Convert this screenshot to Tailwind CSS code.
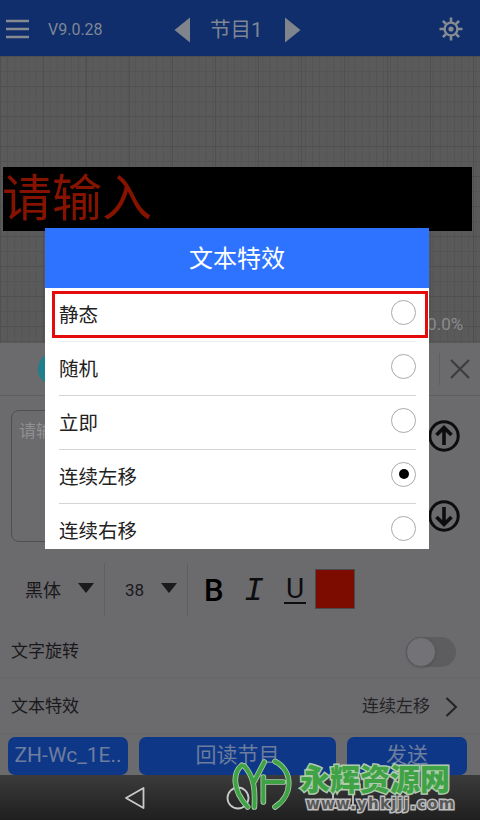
<!DOCTYPE html>
<html lang="zh">
<head>
<meta charset="utf-8">
<script src="https://cdn.jsdelivr.net/npm/@tailwindcss/browser@4"></script>
</head>
<body class="m-0">
<div class="relative w-[480px] h-[820px] overflow-hidden flex flex-col bg-[#6b6a6d] font-['Roboto','Noto_Sans_CJK_SC',sans-serif]">

  <!-- header -->
  <header class="h-[56px] shrink-0 bg-[#0f2e6b] flex items-center text-[#7f8794] pt-[4px]">
    <svg class="ml-[6px] mr-[19px] -mt-[2px]" width="23" height="20" viewBox="0 0 23 20"><path d="M0 2h23M0 10h23M0 18h23" stroke="#868b92" stroke-width="2.6"/></svg>
    <span class="text-[16px] w-[127px] -mt-[1px]">V9.0.28</span>
    <svg class="-ml-[1px]" width="17" height="26" viewBox="0 0 17 26"><path d="M16 0.5V25.5L0.5 13Z" fill="#80858d"/></svg>
    <span class="text-[20.5px] w-[74px] ml-[19px] leading-none">节目1</span>
    <svg width="17" height="26" viewBox="0 0 17 26"><path d="M1 0.5V25.5L16.5 13Z" fill="#80858d"/></svg>
    <svg class="ml-auto mr-[17px] -mt-[2px]" width="24" height="24" viewBox="0 0 24 24" fill="none" stroke="#868b92">
      <circle cx="12" cy="12" r="6.4" stroke-width="2.4"/><circle cx="12" cy="12" r="2.6" fill="#868b92" stroke="none"/>
      <path d="M12 0.5V5M12 19V23.5M0.5 12H5M19 12H23.5M3.9 3.9L7 7M17 17L20.1 20.1M20.1 3.9L17 7M7 17L3.9 20.1" stroke-width="2.6"/>
    </svg>
  </header>

  <!-- canvas -->
  <section class="relative h-[287px] shrink-0 bg-[#5a5a5b] bg-[linear-gradient(#4f4f50_1px,transparent_1px),linear-gradient(90deg,#505051_1px,transparent_1px),linear-gradient(#545455_1px,transparent_1px),linear-gradient(90deg,#545455_1px,transparent_1px)] bg-[size:100%_30px,43px_100%,100%_15px,7.1px_100%] pt-[111px]">
    <div class="ml-[3px] w-[469px] h-[64px] bg-black text-[#861300] text-[50px] leading-[64px] -indent-[1px] whitespace-nowrap">请输入</div>
    <span class="absolute left-[408px] top-[258px] text-[17px] text-[#8b8b8d] leading-5">100.0%</span>
  </section>

  <!-- panel -->
  <section class="flex-1 flex flex-col min-h-0">
    <div class="h-[53px] shrink-0 border-b border-[#5f5e61] flex items-center">
      <div class="ml-[38px] w-[34px] h-[34px] rounded-full bg-[#1f7f8c]"></div>
      <div class="ml-auto h-[32px] w-px bg-[#5f5e61]"></div>
      <svg class="mx-[10px]" width="20" height="20" viewBox="0 0 20 20"><path d="M1 1L19 19M19 1L1 19" stroke="#3d3d40" stroke-width="2.2"/></svg>
    </div>

    <div class="h-[167px] shrink-0 flex pl-[11px] pt-[14px]">
      <div class="w-[405px] h-[132px] rounded-[8px] border border-[#4f4e51] pl-[7px] pt-[8px] text-[17px] leading-6 text-[#8f8e91]">请输入</div>
      <div class="ml-[12px] pt-[10px] flex flex-col gap-[48px]">
        <svg width="32" height="32" viewBox="0 0 32 32" fill="none" stroke="#0d0d10" stroke-width="3"><circle cx="16" cy="16" r="14.2"/><path d="M16 25V8M8.5 15L16 7.5L23.5 15" stroke-width="3.6"/></svg>
        <svg width="32" height="32" viewBox="0 0 32 32" fill="none" stroke="#0d0d10" stroke-width="3"><circle cx="16" cy="16" r="14.2"/><path d="M16 7V24M8.5 17L16 24.5L23.5 17" stroke-width="3.6"/></svg>
      </div>
    </div>

    <!-- toolbar -->
    <div class="h-[53px] shrink-0 flex items-center">
      <span class="ml-[25px] text-[18px] text-[#19191c] w-[53px] pt-[2px]">黑体</span>
      <svg class="-mt-[3px]" width="16" height="10" viewBox="0 0 16 10"><path d="M0 0H16L8 10Z" fill="#1a1a1d"/></svg>
      <span class="ml-[10px] w-px h-[53px] bg-[#5f5e61]"></span>
      <span class="ml-[20px] text-[17px] text-[#19191c] w-[36px] pt-[2px]">38</span>
      <svg class="-mt-[3px]" width="16" height="10" viewBox="0 0 16 10"><path d="M0 0H16L8 10Z" fill="#1a1a1d"/></svg>
      <span class="ml-[10px] w-px h-[53px] bg-[#5f5e61]"></span>
      <span class="ml-[16px] w-[40px] text-[31px] leading-none font-medium text-black font-['Roboto'] pt-[1px]">B</span>
      <span class="w-[40px] text-[33px] leading-none italic text-[#0d0d10] font-['Liberation_Mono'] pt-[3px]">I</span>
      <span class="w-[22px] text-[28px] leading-[25px] text-[#0d0d10] font-['Roboto'] border-b-2 border-[#0d0d10] flex justify-center h-[28px] pb-[1px]">U</span>
      <span class="ml-[9px] w-[40px] h-[40px] bg-[#7c0c00] border border-[#4a4a4d] -mt-[2px]"></span>
    </div>

    <div class="h-[62px] shrink-0 border-b border-[#67666a] flex items-center pl-[11px] pr-[24px] pt-[11px] text-[17px] text-[#19191c]">
      <span>文字旋转</span>
      <div class="relative ml-auto w-[50px] h-[30px] rounded-full bg-[#5d5c5f]">
        <div class="absolute left-0 top-0 w-[30px] h-[30px] rounded-full bg-[#737276] border border-[#5a595c] shadow"></div>
      </div>
    </div>

    <div class="h-[56px] shrink-0 border-b border-[#67666a] flex items-center pl-[11px] pr-[22px] pt-[3px] text-[17px] text-[#19191c]">
      <span>文本特效</span>
      <span class="ml-auto text-[#232326]">连续左移</span>
      <svg class="ml-[15px]" width="13" height="20" viewBox="0 0 13 20" fill="none"><path d="M1.5 1L11 10L1.5 19" stroke="#232326" stroke-width="2"/></svg>
    </div>

    <div class="h-[38px] shrink-0 flex gap-[11px] px-[8px] mt-[3px] text-[21px] text-[#6c7d9e]">
      <div class="w-[120px] rounded-[7px] bg-[#0f3787] flex items-center justify-center">ZH-Wc_1E..</div>
      <div class="w-[197px] rounded-[7px] bg-[#0f3787] flex items-center justify-center">回读节目</div>
      <div class="w-[120px] rounded-[7px] bg-[#0f3787] flex items-center justify-center">发送</div>
    </div>
  </section>

  <!-- system nav -->
  <nav class="h-[45px] shrink-0 bg-[linear-gradient(#3b3b3c,#1f1f20)] flex items-center">
    <svg class="ml-[124px]" width="22" height="24" viewBox="0 0 22 24" fill="none"><path d="M19.5 2V22L2 12Z" stroke="#c9c9c9" stroke-width="1.8" stroke-linejoin="round"/></svg>
    <svg class="ml-[80px]" width="24" height="24" viewBox="0 0 24 24" fill="none"><circle cx="12" cy="12" r="10.5" stroke="#c9c9c9" stroke-width="1.8"/></svg>
    <svg class="ml-[82px]" width="22" height="24" viewBox="0 0 22 24" fill="none"><rect x="1" y="2" width="20" height="20" stroke="#c9c9c9" stroke-width="1.8"/></svg>
  </nav>

  <!-- dialog -->
  <div class="absolute left-[45px] top-[228px] w-[384px] h-[321px] overflow-hidden bg-white">
    <div class="h-[60px] pt-[1px] bg-[#2e73ff] text-white text-[24px] flex items-center justify-center">文本特效</div>
    <div class="relative h-[54px] text-[19.5px] text-[#222] flex items-center pl-[14px] pr-[13px]">
      <span class="pt-[2px]">静态</span>
      <span class="ml-auto -mt-[6px] w-[25px] h-[25px] rounded-full border border-[#aaa]"></span>
      <div class="absolute left-[7px] top-[3px] w-[376px] h-[47px] border-[3px] border-[#e30b0b]"></div>
      <div class="absolute left-[14px] right-[13px] bottom-0 h-px bg-[#ececec]"></div>
    </div>
    <div class="relative h-[54px] text-[19.5px] text-[#222] flex items-center pl-[14px] pr-[13px]">
      <span class="pt-[2px]">随机</span>
      <span class="ml-auto -mt-[6px] w-[25px] h-[25px] rounded-full border border-[#aaa]"></span>
      <div class="absolute left-[14px] right-[13px] bottom-0 h-px bg-[#d4d4d4]"></div>
    </div>
    <div class="relative h-[54px] text-[19.5px] text-[#222] flex items-center pl-[14px] pr-[13px]">
      <span class="pt-[2px]">立即</span>
      <span class="ml-auto -mt-[6px] w-[25px] h-[25px] rounded-full border border-[#aaa]"></span>
      <div class="absolute left-[14px] right-[13px] bottom-0 h-px bg-[#d4d4d4]"></div>
    </div>
    <div class="relative h-[54px] text-[19.5px] text-[#222] flex items-center pl-[14px] pr-[13px]">
      <span class="pt-[2px]">连续左移</span>
      <span class="ml-auto -mt-[6px] w-[25px] h-[25px] rounded-full border border-[#aaa] flex items-center justify-center"><span class="w-[10px] h-[10px] rounded-full bg-black"></span></span>
      <div class="absolute left-[14px] right-[13px] bottom-0 h-px bg-[#d4d4d4]"></div>
    </div>
    <div class="relative h-[54px] text-[19.5px] text-[#222] flex items-center pl-[14px] pr-[13px]">
      <span class="pt-[2px]">连续右移</span>
      <span class="ml-auto -mt-[6px] w-[25px] h-[25px] rounded-full border border-[#aaa]"></span>
    </div>
  </div>

  <!-- watermark -->
  <svg class="absolute left-[225px] top-[752px]" width="75" height="68" viewBox="0 0 225 204" fill="none" stroke-linecap="round" stroke-linejoin="round">
    <path d="M50 40C24 62 20 112 68 165M58 42C82 70 92 100 88 165M118 30L88 88M115 75V150M115 90H175M150 28C205 55 205 130 150 165" stroke="#aecbae" stroke-width="17"/>
    <path d="M50 40C24 62 20 112 68 165M58 42C82 70 92 100 88 165M118 30L88 88M115 75V150M115 90H175M150 28C205 55 205 130 150 165" stroke="#3fa244" stroke-width="12"/>
  </svg>
  <div class="absolute left-[300px] top-[762px] text-[30px] leading-[36px] font-black text-[#3fa244] [paint-order:stroke_fill] [-webkit-text-stroke:3px_#aecbae] whitespace-nowrap">永辉资源网</div>
  <div class="absolute left-[306px] top-[795px] text-[15px] leading-[18px] font-bold tracking-[1.2px] text-[#585858] [paint-order:stroke_fill] [-webkit-text-stroke:3px_#bdbdbd] whitespace-nowrap font-['DejaVu_Sans']">www.yhkjjj.com</div>
</div>
</body>
</html>
